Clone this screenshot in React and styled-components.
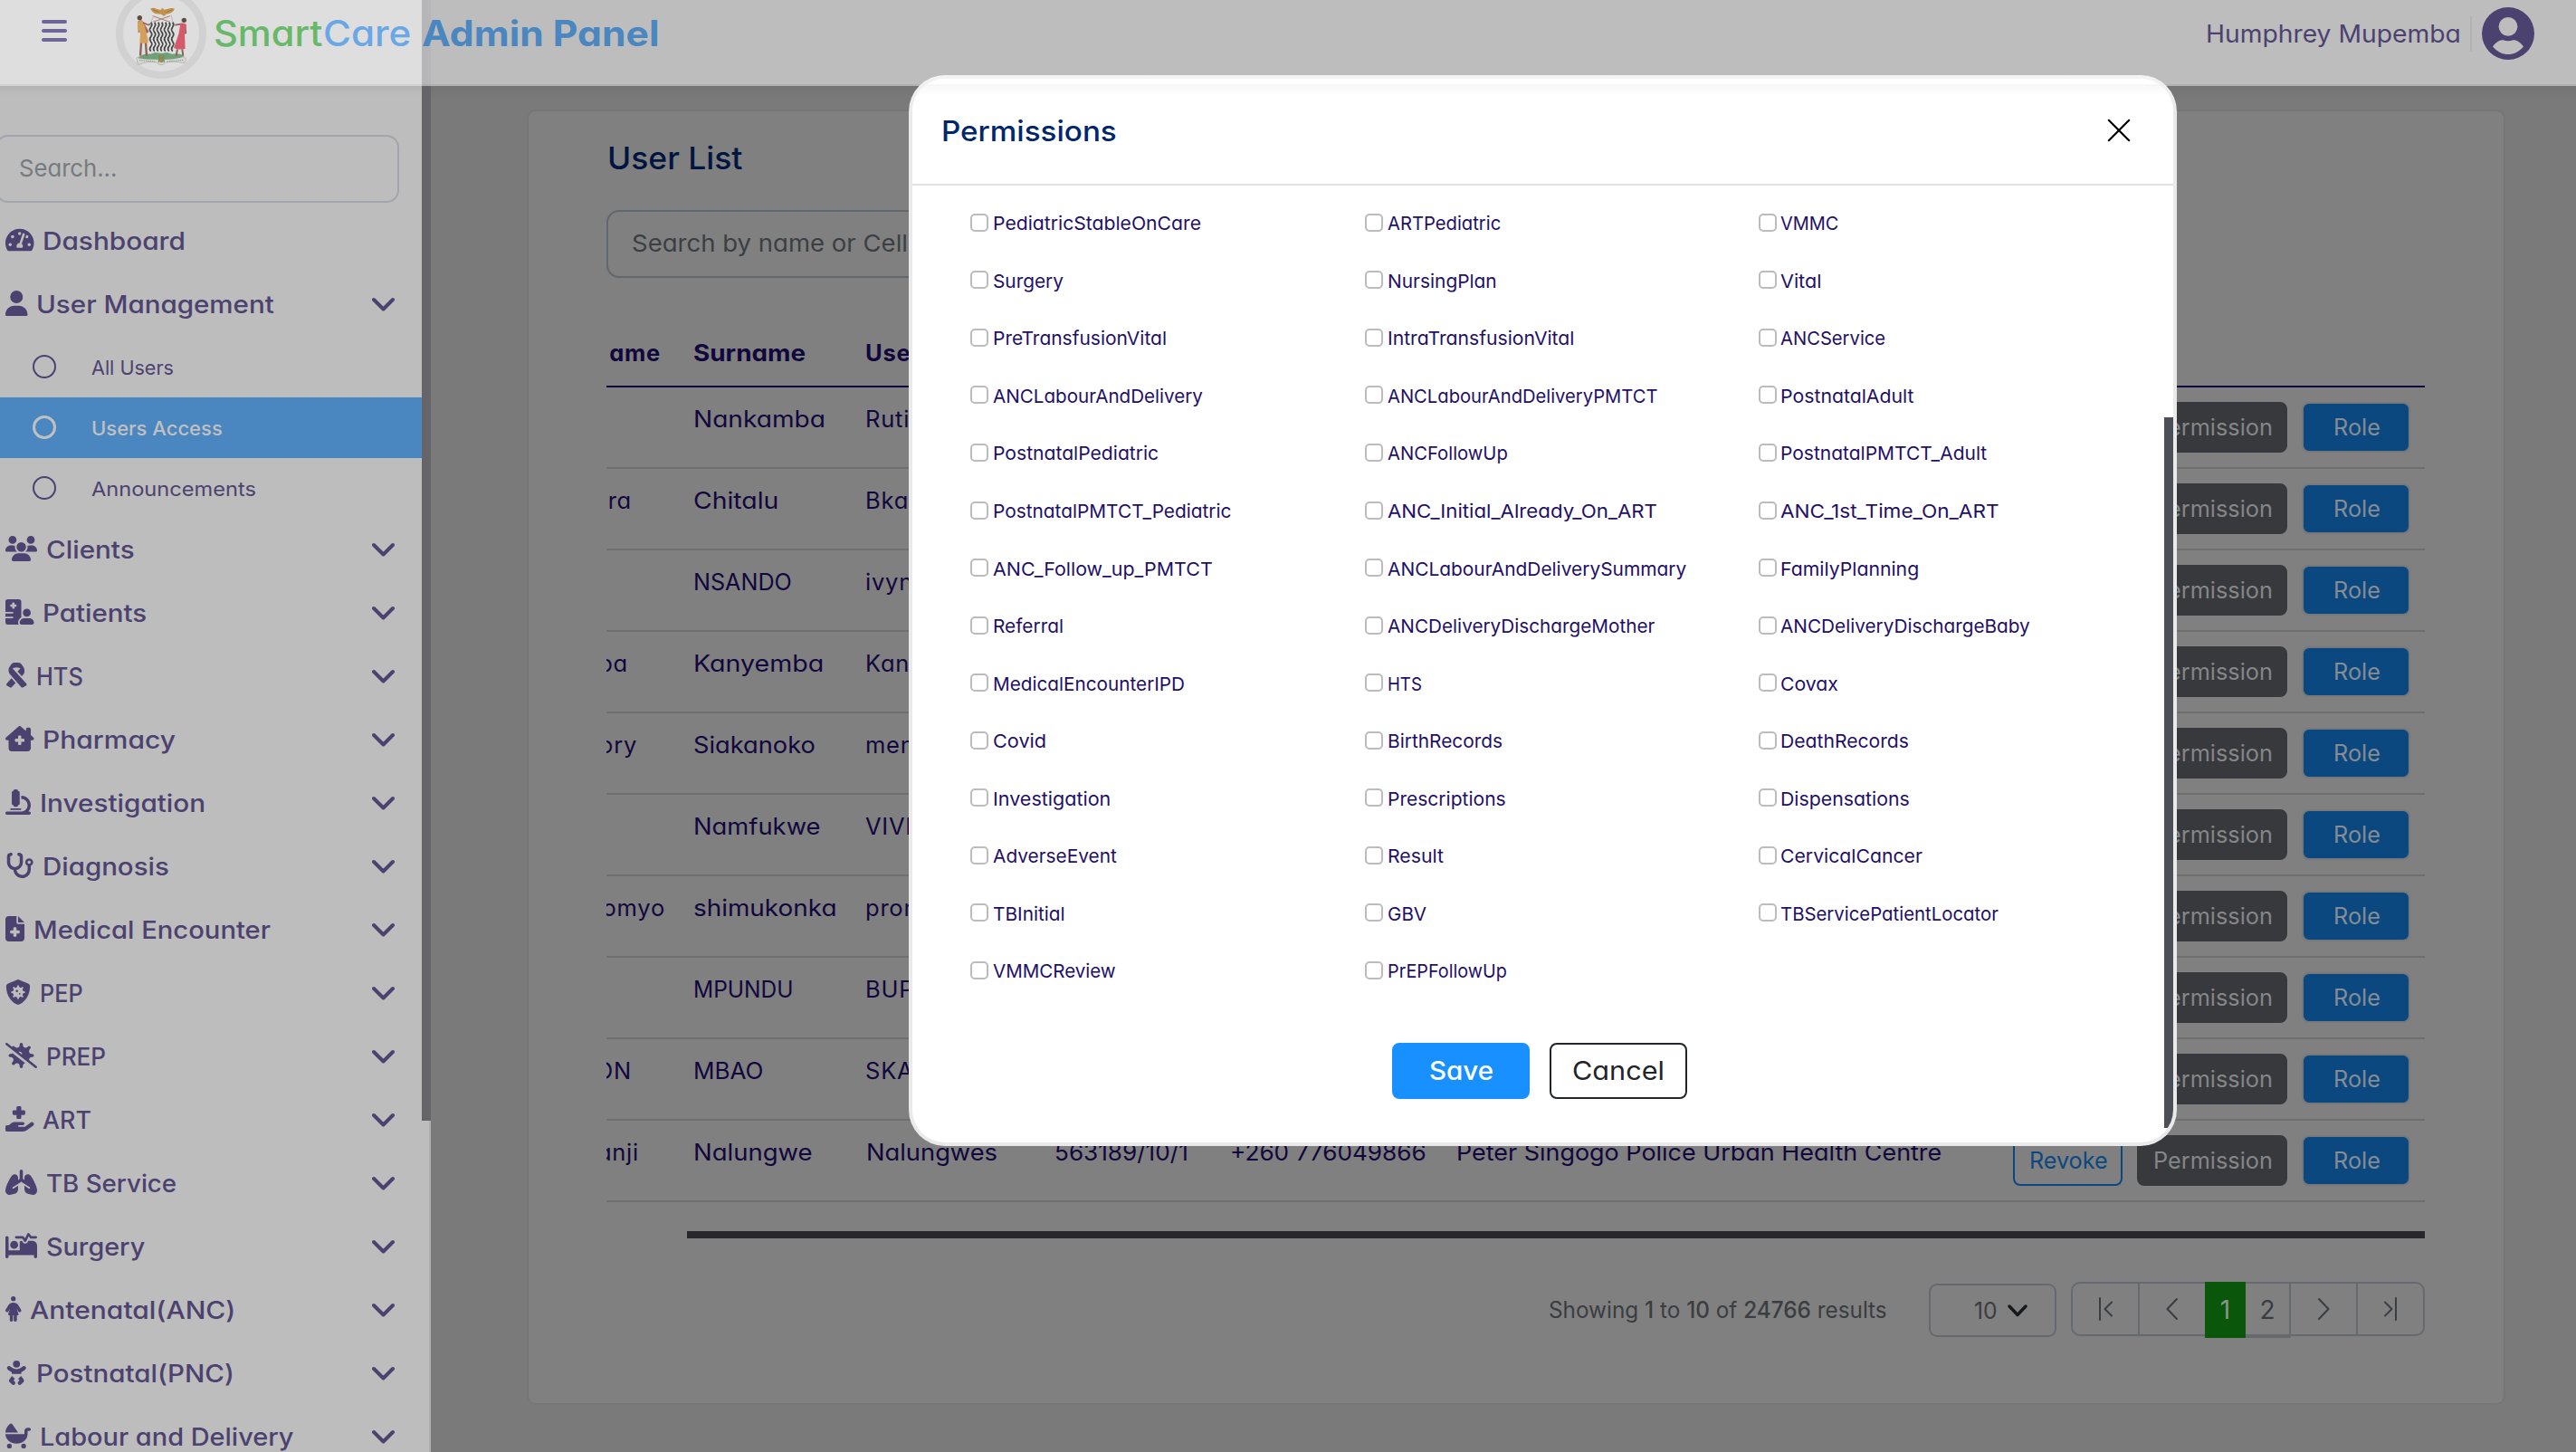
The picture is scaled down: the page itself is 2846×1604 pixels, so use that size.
import React, { useLayoutEffect, useRef, useState } from "react";
import styled, { createGlobalStyle, css } from "styled-components";
import { FaTachometerAlt } from "react-icons/fa";
import {
  FaUser,
  FaUsers,
  FaHospitalUser,
  FaRibbon,
  FaHouseChimneyMedical,
  FaMicroscope,
  FaStethoscope,
  FaFileMedical,
  FaShieldVirus,
  FaVirusSlash,
  FaHandHoldingMedical,
  FaLungs,
  FaBedPulse,
  FaPersonDress,
  FaBaby,
  FaBabyCarriage,
} from "react-icons/fa6";

const GlobalStyle = createGlobalStyle`
  *, *::before, *::after { box-sizing: border-box; }
  html, body { margin: 0; padding: 0; overflow: hidden; background: #7a7a7a; }
  body {
    font-family: "Inter", "Liberation Sans", sans-serif;
    font-feature-settings: "cv11";
    font-size: 26px;
    color: #12073d;
  }
  button, input { font: inherit; font-feature-settings: inherit; }
`;

/* ---------- text fitted to a given measure ---------- */

const Measure = styled.span`
  display: inline-block;
  white-space: nowrap;
  text-align: left;
  margin-left: 0.02em;
`;

const Glyphs = styled.span`
  display: inline-block;
  transform-origin: 0 50%;
`;

function Text({ w, children }) {
  const ref = useRef(null);
  const [fit, setFit] = useState(null);
  useLayoutEffect(() => {
    const el = ref.current;
    if (!w || !el) return;
    const size = parseFloat(getComputedStyle(el).fontSize);
    const width = w + size * 0.06;
    setFit({ width, scale: width / el.offsetWidth });
  }, [w]);
  return (
    <Measure style={fit ? { width: `${fit.width}px` } : undefined}>
      <Glyphs ref={ref} style={fit ? { transform: `scaleX(${fit.scale})` } : undefined}>
        {children}
      </Glyphs>
    </Measure>
  );
}

/* ---------- page frame ---------- */

const Page = styled.div`
  position: relative;
  width: 2846px;
  height: 1604px;
  overflow: hidden;
  display: flex;
  flex-direction: column;
`;

const Body = styled.div`
  flex: 1;
  min-height: 0;
  display: flex;
`;

/* ---------- header ---------- */

const Header = styled.header`
  height: 95px;
  flex: none;
  display: flex;
  align-items: flex-start;
  justify-content: space-between;
  background: linear-gradient(90deg, #dedede 466px, #b6b6b9 466px 476px, #bdbdbd 476px);
  box-shadow: inset 0 -2px 0 rgba(0, 0, 0, 0.06);
`;

const HeaderSide = styled.div`
  height: 74px;
  display: flex;
  align-items: center;
`;

const Burger = styled.div`
  width: 28px;
  margin: 0 54px 6px 46px;
  display: flex;
  flex-direction: column;
  gap: 6px;
`;

const BurgerBar = styled.i`
  height: 4px;
  border-radius: 2px;
  background: #6d6497;
`;

const Crest = styled.svg`
  width: 100px;
  height: 100px;
  flex: none;
`;

const Brand = styled.h1`
  margin: 0 0 0 7px;
  display: flex;
  font-size: 39px;
  line-height: 60px;
  font-weight: 450;
  white-space: nowrap;
`;

const BrandPart = styled.span`
  color: ${(p) => p.$color};
  width: ${(p) => p.$width}px;
  font-weight: ${(p) => p.$weight || 450};
`;

const UserName = styled.div`
  font-size: 26.5px;
  font-weight: 430;
  color: #4c4270;
  margin-right: 10px;
`;

const UserRule = styled.div`
  width: 2px;
  height: 39px;
  background: #b2b2b2;
  margin-right: 11px;
`;

const Avatar = styled.svg`
  width: 58px;
  height: 58px;
  margin-right: 46px;
  fill: #4c4270;
`;

/* ---------- sidebar ---------- */

const Sidebar = styled.aside`
  width: 476px;
  flex: none;
  display: flex;
  background: #bdbdbd;
  box-shadow: inset 0 12px 10px -8px rgba(0, 0, 0, 0.06);
`;

const SidebarContent = styled.div`
  width: 466px;
  height: 1509px;
  overflow: hidden;
  padding-top: 54px;
`;

const SidebarTrack = styled.div`
  width: 10px;
  border-right: 2px solid #b0b0b0;
`;

const SidebarThumb = styled.div`
  width: 10px;
  height: 1143px;
  background: #646469;
`;

const SideSearch = styled.div`
  width: 446px;
  height: 75px;
  margin: 0 0 7px -5px;
  padding: 0 0 3px 23px;
  border: 2px solid #a2a6aa;
  border-radius: 14px;
  display: flex;
  align-items: center;
  font-size: 26px;
  color: #767b80;
`;

const NavRow = styled.div`
  height: 70px;
  padding: 0 30px 0 6px;
  display: flex;
  align-items: center;
  color: #4c4270;
  font-size: 27px;
  font-weight: 470;

  & > svg:first-child {
    height: 28px;
    width: ${(p) => p.$iconWidth}px;
    margin: 0 9px 3px 0;
    flex: none;
  }
`;

const Chevron = styled.svg`
  width: 25px;
  height: 16px;
  margin-left: auto;
  fill: none;
  stroke: #4c4270;
  stroke-width: 4;
  stroke-linecap: round;
  stroke-linejoin: round;
`;

const SubRow = styled.div`
  height: 67px;
  padding-left: 36px;
  display: flex;
  align-items: center;
  gap: 39px;
  font-size: 21.5px;
  color: #4c4270;
  position: relative;
  top: 1px;
  ${(p) =>
    p.$active &&
    css`
      background: #4a86c0;
      color: #c0c0c0;
      font-weight: 480;
    `}
`;

const Ring = styled.i`
  width: 26px;
  height: 26px;
  margin-bottom: 2px;
  border-radius: 50%;
  border: ${(p) => (p.$active ? 3.5 : 2.5)}px solid currentColor;
`;

/* ---------- main card ---------- */

const Main = styled.main`
  flex: 1;
  padding: 26px 78px 52px 106px;
  background: linear-gradient(#747474, #7a7a7a 16px);
`;

const Card = styled.section`
  height: 1431px;
  padding: 50px 87px 0 86px;
  background: #808080;
  border: 2px solid #767676;
  border-radius: 10px;
`;

const CardTitle = styled.h2`
  margin: 0;
  height: 59px;
  line-height: 4px;
  font-size: 34px;
  font-weight: 480;
  color: #001540;
`;

const ListSearch = styled.div`
  height: 75px;
  width: 700px;
  padding: 0 0 3px 25px;
  border: 2px solid #62676b;
  border-radius: 14px;
  display: flex;
  align-items: center;
  font-size: 26px;
  color: #3b3f43;
`;

const Table = styled.div`
  margin-top: 43px;
  display: flex;
  flex-direction: column;
`;

const TableLine = styled.div`
  height: ${(p) => (p.$head ? 78 : 90)}px;
  border-bottom: 2px solid ${(p) => (p.$head ? "#10063c" : "#6f6f6f")};
  display: grid;
  grid-template-columns: 95px 191px 208px 194px 250px 616px 1fr;
  font-size: 25.5px;
  line-height: 38px;
  padding-top: ${(p) => (p.$head ? 21 : 16)}px;
  font-weight: ${(p) => (p.$head ? 650 : 400)};
  color: #12073d;
  white-space: nowrap;
`;

const Cell = styled.div`
  letter-spacing: ${(p) => (p.$loose ? "0.03em" : "normal")};
`;

const ClippedCell = styled.div`
  overflow: hidden;
  display: flex;
  justify-content: flex-end;
  padding-right: ${(p) => p.$end}px;
  letter-spacing: 0.03em;
`;

const Actions = styled.div`
  display: flex;
  gap: 16px;
`;

const ActionButton = styled.button`
  height: 56px;
  padding: 0;
  border-radius: 8px;
  font-size: 25px;
  display: flex;
  align-items: center;
  justify-content: center;
  width: ${(p) => p.$width}px;
  color: ${(p) => p.$color};
  background: ${(p) => p.$bg};
  border: 2px solid ${(p) => p.$border};
`;

const TableScroll = styled.div`
  height: 8px;
  margin: 32px 0 48px 89px;
  background: #28282c;
`;

const Footer = styled.div`
  display: flex;
  justify-content: flex-end;
  align-items: flex-start;
  color: #3a3d41;
`;

const Summary = styled.div`
  width: 421px;
  line-height: 62px;
  font-size: 25px;
  b { font-weight: 550; }
`;

const PageSize = styled.div`
  width: 141px;
  height: 59px;
  margin: 2px 16px 0 0;
  padding: 0 30px 0 47px;
  border: 2px solid #666a6f;
  border-radius: 9px;
  display: flex;
  align-items: center;
  justify-content: space-between;
  font-size: 26px;
`;

const SizeChevron = styled.svg`
  width: 22px;
  height: 14px;
  fill: none;
  stroke: #17191c;
  stroke-width: 3.5;
  stroke-linecap: round;
  stroke-linejoin: round;
`;

const Pager = styled.div`
  display: flex;
  height: 60px;
  border: 2px solid #666a6f;
  border-radius: 10px;
`;

const PagerStep = styled.div`
  width: ${(p) => p.$width}px;
  display: flex;
  align-items: center;
  justify-content: center;
  border-right: ${(p) => (p.$rule ? 2 : 0)}px solid #666a6f;

  svg {
    width: 30px;
    height: 26px;
    fill: none;
    stroke: #3a3d41;
    stroke-width: 2;
    stroke-linecap: round;
    stroke-linejoin: round;
  }
`;

const PagerNumber = styled.div`
  width: ${(p) => (p.$active ? 45 : 50)}px;
  height: 62px;
  margin-top: -2px;
  display: flex;
  align-items: center;
  justify-content: center;
  font-size: 28px;
  ${(p) =>
    p.$active
      ? css`
          background: #0a560a;
          color: #8b958b;
        `
      : css`
          border: solid #666a6f;
          border-width: 2px 2px 2px 0;
        `}
`;

/* ---------- modal ---------- */

const Modal = styled.div`
  position: absolute;
  left: 1004px;
  top: 83px;
  width: 1401px;
  height: 1183px;
  padding: 4px;
  border-radius: 40px;
  background: linear-gradient(#f4f4f4, #eaeaeb 40px);
`;

const ModalPanel = styled.div`
  height: 1175px;
  border-radius: 36px;
  overflow: hidden;
  background: #ffffff;
  display: flex;
  flex-direction: column;
`;

const ModalHeader = styled.div`
  height: 118px;
  flex: none;
  padding: 0 47px 1px 31px;
  border-bottom: 2px solid #dee2e6;
  background: linear-gradient(#fff 6px, #f7f7f7 6px, #ffffff 20px);
  display: flex;
  align-items: center;
  justify-content: space-between;
`;

const ModalTitle = styled.h3`
  margin: 0;
  font-size: 31px;
  font-weight: 480;
  color: #00266c;
`;

const CloseIcon = styled.svg`
  width: 26px;
  height: 26px;
  margin-top: -1px;
  stroke: #000;
  stroke-width: 2.2;
  stroke-linecap: round;
`;

const ModalScroll = styled.div`
  flex: 1;
  display: flex;
`;

const ModalContent = styled.div`
  flex: 1;
  padding: 9px 0 0 64px;
`;

const ModalThumb = styled.div`
  width: 10px;
  height: 785px;
  margin-top: 256px;
  background: #4c4f57;
`;

const PermissionGrid = styled.div`
  display: grid;
  grid-template-columns: 436px 434.5px 1fr;
  grid-auto-rows: 63.55px;
`;

const Permission = styled.label`
  display: flex;
  align-items: center;
  padding-top: 2px;
  font-size: 20.5px;
  color: #1f0f66;
`;

const Check = styled.i`
  width: 20px;
  height: 20px;
  margin: 0 4.5px 2px 0;
  border: 2px solid #bcbcbc;
  border-radius: 5px;
  background: #fff;
`;

const ModalActions = styled.div`
  margin: 48px 0 0 466px;
  display: flex;
  gap: 22px;
`;

const ModalButton = styled.button`
  width: 152px;
  height: 62px;
  padding: 0;
  border-radius: 8px;
  font-size: 28px;
  font-weight: ${(p) => (p.$primary ? 480 : 400)};
  color: ${(p) => (p.$primary ? "#ffffff" : "#212529")};
  background: ${(p) => (p.$primary ? "#1890ff" : "#ffffff")};
  border: 2px solid ${(p) => (p.$primary ? "#1890ff" : "#212529")};
`;

/* ---------- data ---------- */

const clinicalNav = [
  ["Clients", 96, FaUsers, 35],
  ["Patients", 113, FaHospitalUser, 31.5],
  ["HTS", 50, FaRibbon, 24.5],
  ["Pharmacy", 145, FaHouseChimneyMedical, 31.5],
  ["Investigation", 182, FaMicroscope, 28],
  ["Diagnosis", 138, FaStethoscope, 31.5],
  ["Medical Encounter", 260, FaFileMedical, 21],
  ["PEP", 46, FaShieldVirus, 28],
  ["PREP", 64, FaVirusSlash, 35],
  ["ART", 52, FaHandHoldingMedical, 31.5],
  ["TB Service", 142, FaLungs, 35],
  ["Surgery", 108, FaBedPulse, 35],
  ["Antenatal(ANC)", 226, FaPersonDress, 17.5],
  ["Postnatal(PNC)", 217, FaBaby, 24.5],
  ["Labour and Delivery", 279, FaBabyCarriage, 28],
];

const users = [
  { surname: ["Nankamba", 145], user: ["Ruti"] },
  { first: "ra", end: 67, surname: ["Chitalu", 93], user: ["Bka"] },
  { surname: ["NSANDO", 107], user: ["ivyn"] },
  { first: "ba", end: 71, surname: ["Kanyemba", 143], user: ["Kan"] },
  { first: "ory", end: 61, surname: ["Siakanoko", 133], user: ["men"] },
  { surname: ["Namfukwe", 139], user: ["VIVI"] },
  { first: "omyo", end: 30, surname: ["shimukonka", 157], user: ["pron"] },
  { surname: ["MPUNDU", 109], user: ["BUP"] },
  { first: "ON", end: 67, surname: ["MBAO", 76], user: ["SKA"] },
  {
    first: "anji",
    end: 59,
    surname: ["Nalungwe", 130],
    user: ["Nalungwes", 144],
    nrc: ["563189/10/1", 146],
    phone: ["+260 776049866", 215],
    facility: ["Peter Singogo Police Urban Health Centre", 535],
  },
];

const permissions = [
  ["PediatricStableOnCare", 229], ["ARTPediatric", 124], ["VMMC", 63],
  ["Surgery", 77], ["NursingPlan", 119], ["Vital", 44],
  ["PreTransfusionVital", 191], ["IntraTransfusionVital", 205], ["ANCService", 115],
  ["ANCLabourAndDelivery", 231], ["ANCLabourAndDeliveryPMTCT", 297], ["PostnatalAdult", 146],
  ["PostnatalPediatric", 182], ["ANCFollowUp", 132], ["PostnatalPMTCT_Adult", 227],
  ["PostnatalPMTCT_Pediatric", 262], ["ANC_Initial_Already_On_ART", 297], ["ANC_1st_Time_On_ART", 240],
  ["ANC_Follow_up_PMTCT", 242], ["ANCLabourAndDeliverySummary", 329], ["FamilyPlanning", 152],
  ["Referral", 77], ["ANCDeliveryDischargeMother", 294], ["ANCDeliveryDischargeBaby", 274],
  ["MedicalEncounterIPD", 211], ["HTS", 37], ["Covax", 63],
  ["Covid", 58], ["BirthRecords", 126], ["DeathRecords", 141],
  ["Investigation", 129], ["Prescriptions", 129], ["Dispensations", 141],
  ["AdverseEvent", 136], ["Result", 61], ["CervicalCancer", 156],
  ["TBInitial", 78], ["GBV", 42], ["TBServicePatientLocator", 240],
  ["VMMCReview", 134], ["PrEPFollowUp", 131],
];

/* ---------- parts ---------- */

const waves = [141, 153, 165, 177, 189, 201, 213];

function CoatOfArms() {
  return (
    <Crest viewBox="24 -40 300 300">
      <circle cx="174" cy="110" r="138" fill="#dedede" stroke="#d1d1d1" strokeWidth="24" />
      <path d="M92 192 Q94 186 104 188 L132 193 Q160 190 174 196 Q200 188 246 188 Q258 188 256 200 L250 208 Q215 200 190 206 Q174 222 158 206 Q130 200 98 214 Z" fill="#d6d6d4" stroke="#a9a9a6" strokeWidth="2" />
      <path d="M102 199 L154 203 M194 203 L248 198" stroke="#8f8f8c" strokeWidth="3" strokeDasharray="4 3" />
      <path d="M98 192 Q110 176 138 178 Q174 162 210 178 Q240 174 250 186 Q224 198 174 196 Q130 198 98 192Z" fill="#6fa077" />
      <path d="M146 52 L204 72 M204 52 L146 72" stroke="#a87f74" strokeWidth="3" />
      <path d="M148 54 L140 74 M208 48 L212 72" stroke="#c4b6b2" strokeWidth="3" />
      <path d="M136 72 H213 V168 Q175 182 136 168Z" fill="#e4e4e4" />
      {waves.map((x) => (
        <path
          key={x}
          d={`M${x - 1} 73 q7 8 0 16 t0 16 t0 16 t0 16 t0 16 t0 16`}
          fill="none"
          stroke="#484848"
          strokeWidth="5"
        />
      ))}
      <path d="M138 28 Q148 22 160 29 L173 32 Q178 20 184 31 L198 28 Q210 24 219 28 Q214 40 200 44 L190 46 L184 53 L174 46 L154 44 Q144 38 138 28Z" fill="#c3924a" />
      <path d="M146 31 L168 40 M212 31 L190 40" stroke="#9b7a50" strokeWidth="3" />
      <circle cx="103" cy="58" r="8" fill="#5f4a45" />
      <path d="M97 70 Q106 62 114 70 L134 104 L126 110 L118 96 L98 108Z" fill="#a36c58" />
      <path d="M97 72 Q106 62 116 72 L122 96 L131 132 L130 142 L103 142 L105 110 L96 92Z" fill="#d2a05a" />
      <path d="M114 74 L132 82 L138 78" stroke="#8f6157" strokeWidth="5" fill="none" />
      <path d="M108 142 L105 184 M123 142 L126 184" stroke="#8f6157" strokeWidth="7" />
      <circle cx="250" cy="66" r="8" fill="#5f4a45" />
      <path d="M244 78 L220 82 M254 84 L256 108 L240 112" stroke="#8f6157" strokeWidth="5" fill="none" />
      <path d="M238 78 Q248 72 258 80 L252 112 L254 160 Q234 166 216 158 L232 112Z" fill="#d45b6a" />
      <path d="M228 162 L224 184 M244 162 L247 184" stroke="#8f6157" strokeWidth="6" />
      <ellipse cx="175" cy="194" rx="7" ry="13" fill="#a98447" />
      <path d="M169 182 L166 206 M181 182 L184 206" stroke="#5d9467" strokeWidth="4" />
    </Crest>
  );
}

function NavItem({ icon: Icon, iconWidth, label, w, expandable }) {
  return (
    <NavRow $iconWidth={iconWidth}>
      <Icon preserveAspectRatio="xMidYMid meet" />
      <Text w={w}>{label}</Text>
      {expandable && (
        <Chevron viewBox="0 0 25 16">
          <path d="M2 3 L12.5 13.5 L23 3" />
        </Chevron>
      )}
    </NavRow>
  );
}

function TopBar() {
  return (
    <Header>
      <HeaderSide>
        <Burger>
          <BurgerBar />
          <BurgerBar />
          <BurgerBar />
        </Burger>
        <CoatOfArms />
        <Brand>
          <BrandPart $color="#67b869" $width={121}><Text w={118}>Smart</Text></BrandPart>
          <BrandPart $color="#69a7e6" $width={109}><Text w={95}>Care</Text></BrandPart>
          <BrandPart $color="#4a86c0" $weight={680}><Text w={260}>Admin Panel</Text></BrandPart>
        </Brand>
      </HeaderSide>
      <HeaderSide>
        <UserName><Text w={280}>Humphrey Mupemba</Text></UserName>
        <UserRule />
        <Avatar viewBox="-29 -29 58 58">
          <circle r="29" />
          <circle cy="-7.7" r="10.4" fill="#bdbdbd" />
          <path
            d="M-17 14.5 C-13 9 -9 7.3 -5.5 7.3 Q0 9.4 5.5 7.3 C9 7.3 13 9 17 14.5 C12 20.5 6 23 0 23 C-6 23 -12 20.5 -17 14.5Z"
            fill="#bdbdbd"
          />
        </Avatar>
      </HeaderSide>
    </Header>
  );
}

function SideNav() {
  return (
    <Sidebar>
      <SidebarContent>
        <SideSearch><Text w={107}>Search...</Text></SideSearch>
        <NavItem icon={FaTachometerAlt} iconWidth={31.5} label="Dashboard" w={156} />
        <NavItem icon={FaUser} iconWidth={24.5} label="User Management" w={261} expandable />
        <SubRow><Ring /><Text w={90}>All Users</Text></SubRow>
        <SubRow $active><Ring $active /><Text w={143}>Users Access</Text></SubRow>
        <SubRow><Ring /><Text w={181}>Announcements</Text></SubRow>
        {clinicalNav.map(([label, w, icon, iconWidth]) => (
          <NavItem key={label} icon={icon} iconWidth={iconWidth} label={label} w={w} expandable />
        ))}
      </SidebarContent>
      <SidebarTrack><SidebarThumb /></SidebarTrack>
    </Sidebar>
  );
}

const field = (value) => value && <Text w={value[1]}>{value[0]}</Text>;

function UserTable() {
  return (
    <Table>
      <TableLine $head>
        <ClippedCell $end={35}>ame</ClippedCell>
        <Cell><Text w={123}>Surname</Text></Cell>
        <Cell $loose>Username</Cell>
      </TableLine>
      {users.map((u) => (
        <TableLine key={u.surname[0]}>
          <ClippedCell $end={u.end || 0}>{u.first}</ClippedCell>
          <Cell>{field(u.surname)}</Cell>
          <Cell $loose={!u.user[1]}>{u.user[1] ? field(u.user) : u.user[0]}</Cell>
          <Cell>{field(u.nrc)}</Cell>
          <Cell>{field(u.phone)}</Cell>
          <Cell>{field(u.facility)}</Cell>
          <Actions>
            <ActionButton $width={121} $color="#0c4880" $bg="transparent" $border="#0c4880">
              <Text w={85}>Revoke</Text>
            </ActionButton>
            <ActionButton $width={166} $color="#858688" $bg="#37393d" $border="#37393d">
              <Text w={130}>Permission</Text>
            </ActionButton>
            <ActionButton $width={120} $color="#858c94" $bg="#0c4880" $border="#777879">
              <Text w={50}>Role</Text>
            </ActionButton>
          </Actions>
        </TableLine>
      ))}
    </Table>
  );
}

function Pagination() {
  return (
    <Footer>
      <Summary>
        <Text w={372}>Showing <b>1</b> to <b>10</b> of <b>24766</b> results</Text>
      </Summary>
      <PageSize>
        <Text w={24}>10</Text>
        <SizeChevron viewBox="0 0 22 14">
          <path d="M2 2 L11 11.5 L20 2" />
        </SizeChevron>
      </PageSize>
      <Pager>
        <PagerStep $width={74} $rule>
          <svg viewBox="0 0 30 26"><path d="M9 1 V25 M22 5.5 L14.5 13 L22 20.5" /></svg>
        </PagerStep>
        <PagerStep $width={72}>
          <svg viewBox="0 0 30 26"><path d="M20 2 L9.5 13 L20 24" /></svg>
        </PagerStep>
        <PagerNumber $active>1</PagerNumber>
        <PagerNumber>2</PagerNumber>
        <PagerStep $width={74} $rule>
          <svg viewBox="0 0 30 26"><path d="M10 2 L20.5 13 L10 24" /></svg>
        </PagerStep>
        <PagerStep $width={72}>
          <svg viewBox="0 0 30 26"><path d="M21 1 V25 M9 5.5 L16.5 13 L9 20.5" /></svg>
        </PagerStep>
      </Pager>
    </Footer>
  );
}

function PermissionsModal() {
  return (
    <Modal role="dialog">
      <ModalPanel>
        <ModalHeader>
          <ModalTitle><Text w={192}>Permissions</Text></ModalTitle>
          <CloseIcon viewBox="0 0 26 26">
            <path d="M1.8 1.8 L24.2 24.2 M24.2 1.8 L1.8 24.2" />
          </CloseIcon>
        </ModalHeader>
        <ModalScroll>
          <ModalContent>
            <PermissionGrid>
              {permissions.map(([name, w]) => (
                <Permission key={name}>
                  <Check />
                  <Text w={w}>{name}</Text>
                </Permission>
              ))}
            </PermissionGrid>
            <ModalActions>
              <ModalButton $primary><Text w={69}>Save</Text></ModalButton>
              <ModalButton><Text w={100}>Cancel</Text></ModalButton>
            </ModalActions>
          </ModalContent>
          <ModalThumb />
        </ModalScroll>
      </ModalPanel>
    </Modal>
  );
}

export default function App() {
  return (
    <Page>
      <GlobalStyle />
      <TopBar />
      <Body>
        <SideNav />
        <Main>
          <Card>
            <CardTitle><Text w={147}>User List</Text></CardTitle>
            <ListSearch><Text w={385}>Search by name or Cellphone</Text></ListSearch>
            <UserTable />
            <TableScroll />
            <Pagination />
          </Card>
        </Main>
      </Body>
      <PermissionsModal />
    </Page>
  );
}
